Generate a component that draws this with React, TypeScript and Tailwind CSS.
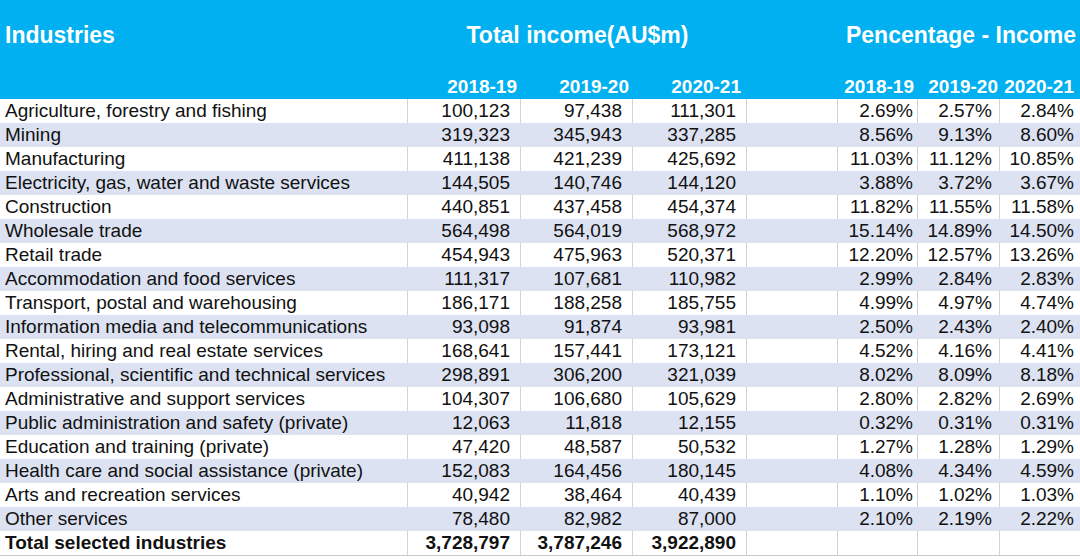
import React from "react";

const rows: string[][] = [
  ["Agriculture, forestry and fishing", "100,123", "97,438", "111,301", "2.69%", "2.57%", "2.84%"],
  ["Mining", "319,323", "345,943", "337,285", "8.56%", "9.13%", "8.60%"],
  ["Manufacturing", "411,138", "421,239", "425,692", "11.03%", "11.12%", "10.85%"],
  ["Electricity, gas, water and waste services", "144,505", "140,746", "144,120", "3.88%", "3.72%", "3.67%"],
  ["Construction", "440,851", "437,458", "454,374", "11.82%", "11.55%", "11.58%"],
  ["Wholesale trade", "564,498", "564,019", "568,972", "15.14%", "14.89%", "14.50%"],
  ["Retail trade", "454,943", "475,963", "520,371", "12.20%", "12.57%", "13.26%"],
  ["Accommodation and food services", "111,317", "107,681", "110,982", "2.99%", "2.84%", "2.83%"],
  ["Transport, postal and warehousing", "186,171", "188,258", "185,755", "4.99%", "4.97%", "4.74%"],
  ["Information media and telecommunications", "93,098", "91,874", "93,981", "2.50%", "2.43%", "2.40%"],
  ["Rental, hiring and real estate services", "168,641", "157,441", "173,121", "4.52%", "4.16%", "4.41%"],
  ["Professional, scientific and technical services", "298,891", "306,200", "321,039", "8.02%", "8.09%", "8.18%"],
  ["Administrative and support services", "104,307", "106,680", "105,629", "2.80%", "2.82%", "2.69%"],
  ["Public administration and safety (private)", "12,063", "11,818", "12,155", "0.32%", "0.31%", "0.31%"],
  ["Education and training (private)", "47,420", "48,587", "50,532", "1.27%", "1.28%", "1.29%"],
  ["Health care and social assistance (private)", "152,083", "164,456", "180,145", "4.08%", "4.34%", "4.59%"],
  ["Arts and recreation services", "40,942", "38,464", "40,439", "1.10%", "1.02%", "1.03%"],
  ["Other services", "78,480", "82,982", "87,000", "2.10%", "2.19%", "2.22%"],
];

const total = ["Total selected industries", "3,728,797", "3,787,246", "3,922,890", "", "", ""];

const GRID = "grid grid-cols-[408px_113px_112px_114px_91px_80px_82px_80px]";

function Row({ cells, striped, bold, last }: { cells: string[]; striped: boolean; bold?: boolean; last?: boolean }) {
  const line = striped ? "border-transparent" : "border-[#d4d4d4]";
  const bg = striped ? "bg-[#dce2f1]" : "bg-white";
  const weight = bold ? "font-bold" : "font-normal";
  const h = last ? "h-[25px] border-b border-b-[#c8c8c8]" : "h-[24px]";
  return (
    <div className={`${GRID} ${bg} ${h} ${weight}`}>
      <div className={`flex items-center pl-[5px] border-r ${line} whitespace-nowrap`}>{cells[0]}</div>
      <div className={`flex items-center justify-end pr-[10px] border-r ${line}`}>{cells[1]}</div>
      <div className={`flex items-center justify-end pr-[10px] border-r ${line}`}>{cells[2]}</div>
      <div className={`flex items-center justify-end pr-[10px] border-r ${line}`}>{cells[3]}</div>
      <div className={`border-r ${line}`}></div>
      <div className={`flex items-center justify-end pr-[4px] border-r ${line}`}>{cells[4]}</div>
      <div className={`flex items-center justify-end pr-[7px] border-r ${line}`}>{cells[5]}</div>
      <div className={`flex items-center justify-end pr-[6px]`}>{cells[6]}</div>
    </div>
  );
}

export default function App() {
  return (
    <div
      className="w-[1080px] h-[559px] bg-white overflow-hidden text-[19px] leading-[22px] text-[#111]"
      style={{ fontFamily: '"Liberation Sans", Arial, sans-serif' }}
    >
      <div className="bg-[#00b0f0] h-[99px] text-white font-bold flex flex-col">
        <div className={`${GRID} h-[70px] text-[23px] leading-[26px]`}>
          <div className="flex items-center pl-[5px]">Industries</div>
          <div className="col-span-3 flex items-center justify-center">Total income(AU$m)</div>
          <div></div>
          <div className="col-span-3 flex items-center justify-center pl-[4px]">Pencentage - Income</div>
        </div>
        <div className={`${GRID} h-[29px] items-end pb-[1px]`}>
          <div></div>
          <div className="text-right pr-[4px]">2018-19</div>
          <div className="text-right pr-[4px]">2019-20</div>
          <div className="text-right pr-[6px]">2020-21</div>
          <div></div>
          <div className="text-right pr-[4px]">2018-19</div>
          <div className="text-right pr-[2px]">2019-20</div>
          <div className="text-right pr-[6px]">2020-21</div>
        </div>
      </div>
      {rows.map((r, i) => (
        <Row key={i} cells={r} striped={i % 2 === 1} />
      ))}
      <Row cells={total} striped={false} bold last />
    </div>
  );
}
